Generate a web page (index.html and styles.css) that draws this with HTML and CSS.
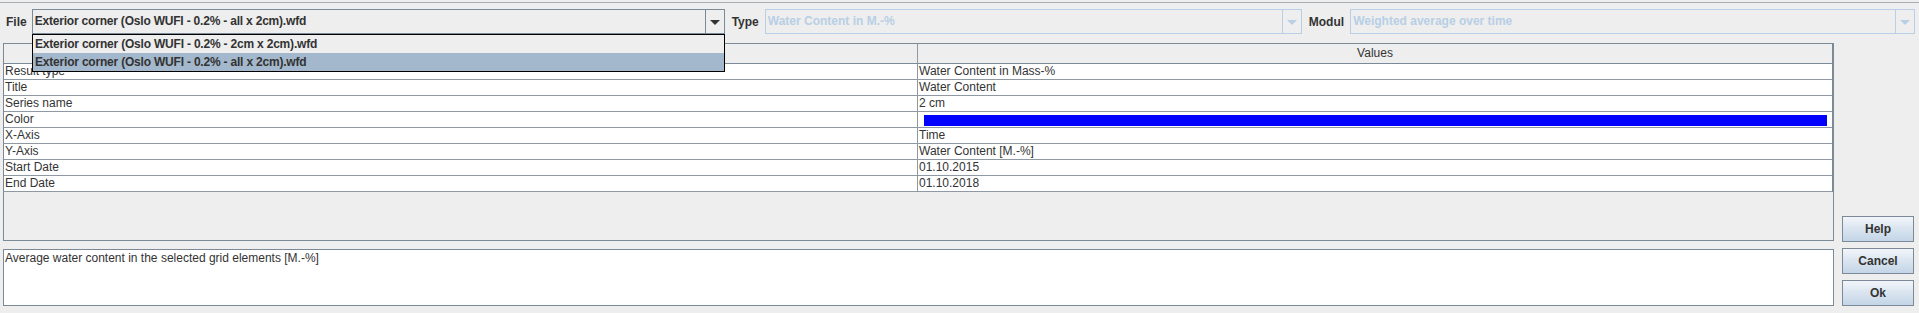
FILE: index.html
```html
<!DOCTYPE html>
<html lang="en">
<head>
    <meta charset="UTF-8">
    <title>Result Settings</title>
    <link rel="stylesheet" href="styles.css">
</head>
<body>
    <div class="window">
        <div class="toolbar">
            <span class="field-label label-file">File</span>
            <div class="combo combo-file">
                <span class="combo-text">Exterior corner (Oslo WUFI - 0.2% - all x 2cm).wfd</span>
                <span class="combo-arrow"><span class="tri"></span></span>
            </div>
            <span class="field-label">Type</span>
            <div class="combo combo-type disabled">
                <span class="combo-text">Water Content in M.-%</span>
                <span class="combo-arrow"><span class="tri"></span></span>
            </div>
            <span class="field-label">Modul</span>
            <div class="combo combo-modul disabled">
                <span class="combo-text">Weighted average over time</span>
                <span class="combo-arrow"><span class="tri"></span></span>
            </div>

            <!-- open dropdown of the File combo -->
            <div class="popup">
                <div class="popup-item">Exterior corner (Oslo WUFI - 0.2% - 2cm x 2cm).wfd</div>
                <div class="popup-item selected">Exterior corner (Oslo WUFI - 0.2% - all x 2cm).wfd</div>
            </div>
        </div>

        <div class="main">
            <div class="left-col">
                <div class="scroll-pane">
                    <div class="grid">
                        <div class="head">Property</div>
                        <div class="head">Values</div>

                        <div class="cell">Result type</div>
                        <div class="cell">Water Content in Mass-%</div>
                        <div class="cell">Title</div>
                        <div class="cell">Water Content</div>
                        <div class="cell">Series name</div>
                        <div class="cell">2 cm</div>
                        <div class="cell">Color</div>
                        <div class="cell"><div class="color-bar"></div></div>
                        <div class="cell">X-Axis</div>
                        <div class="cell">Time</div>
                        <div class="cell">Y-Axis</div>
                        <div class="cell">Water Content [M.-%]</div>
                        <div class="cell">Start Date</div>
                        <div class="cell">01.10.2015</div>
                        <div class="cell">End Date</div>
                        <div class="cell">01.10.2018</div>
                    </div>
                </div>
                <div class="description">Average water content in the selected grid elements [M.-%]</div>
            </div>
            <div class="right-col">
                <button class="btn">Help</button>
                <button class="btn">Cancel</button>
                <button class="btn">Ok</button>
            </div>
        </div>
    </div>
</body>
</html>
```

FILE: styles.css
```css
body {
    margin: 0;
    padding: 2px 0 0 0;
    background-color: #eeeeee;
    font-family: "Liberation Sans", Arial, sans-serif;
    font-size: 12px;
    color: #333333;
}
.window {
    border-top: 1px solid #a9aeb3;
    height: 310px;
    box-sizing: border-box;
}
.toolbar {
    position: relative;
    display: flex;
    align-items: center;
    padding: 6px 0 0 6px;
    height: 25px;
}
.field-label {
    font-weight: bold;
    margin-right: 6px;
}
.label-file {
    margin-right: 5px;
}
.combo {
    display: flex;
    height: 25px;
    box-sizing: border-box;
    border: 1px solid #7a8a99;
    background-color: #eeeeee;
    margin-right: 7px;
    font-weight: bold;
}
.combo-file {
    width: 693px;
}
.combo-file .combo-text {
    letter-spacing: -0.2px;
}
.combo-type {
    width: 537px;
}
.combo-modul {
    width: 565px;
    margin-right: 0;
}
.combo-text {
    flex: 1;
    padding-left: 2px;
    line-height: 23px;
    white-space: nowrap;
    overflow: hidden;
}
.combo-arrow {
    width: 18px;
    border-left: 1px solid #7a8a99;
    display: flex;
    align-items: center;
    justify-content: center;
}
.tri {
    width: 0;
    height: 0;
    border-left: 5px solid transparent;
    border-right: 5px solid transparent;
    border-top: 5px solid #333333;
    margin-top: 1px;
}
.combo.disabled {
    border-color: #b8cfe5;
    color: #b8cfe5;
}
.combo.disabled .combo-arrow {
    border-left-color: #b8cfe5;
}
.combo.disabled .tri {
    border-top-color: #b8cfe5;
}
.popup {
    position: absolute;
    left: 32px;
    top: 31px;
    width: 693px;
    box-sizing: border-box;
    border: 1px solid #000000;
    background-color: #eeeeee;
    z-index: 2;
    font-weight: bold;
    letter-spacing: -0.2px;
}
.popup-item {
    height: 18px;
    line-height: 18px;
    padding-left: 2px;
}
.popup-item.selected {
    background-color: #a3b8cc;
}
.main {
    display: flex;
    gap: 8px;
    padding: 0 5px 0 3px;
    margin-top: 9px;
    height: 263px;
}
.left-col {
    flex: 1;
    display: flex;
    flex-direction: column;
    gap: 8px;
}
.scroll-pane {
    height: 198px;
    box-sizing: border-box;
    border: 1px solid #7a8a99;
    background-color: #eeeeee;
}
.grid {
    display: grid;
    grid-template-columns: 914px 1fr;
    border-right: 1px solid #7a8a99;
}
.head {
    height: 19px;
    line-height: 19px;
    text-align: center;
    color: #eeeeee;
    border-bottom: 1px solid #7a8a99;
    background-color: #eeeeee;
}
.head + .head {
    color: #333333;
}
.cell {
    height: 15px;
    line-height: 15px;
    padding-left: 1px;
    background-color: #ffffff;
    border-bottom: 1px solid #8e99a4;
    white-space: nowrap;
    overflow: hidden;
}
.head:nth-child(odd),
.cell:nth-child(odd) {
    border-right: 1px solid #8e99a4;
}
.color-bar {
    height: 11px;
    margin: 3px 5px 0 5px;
    background-color: #0000ff;
}
.description {
    height: 57px;
    box-sizing: border-box;
    border: 1px solid #7a8a99;
    background-color: #ffffff;
    padding: 1px 1px;
    line-height: 14px;
}
.right-col {
    width: 72px;
    display: flex;
    flex-direction: column;
    justify-content: flex-end;
    gap: 6px;
}
.btn {
    height: 26px;
    width: 72px;
    border: 1px solid #7a8a99;
    background: linear-gradient(#f2f6fa, #d9e4ef 50%, #c4d5e7);
    font-family: "Liberation Sans", Arial, sans-serif;
    font-size: 12px;
    font-weight: bold;
    color: #333333;
    padding: 0;
}
```
